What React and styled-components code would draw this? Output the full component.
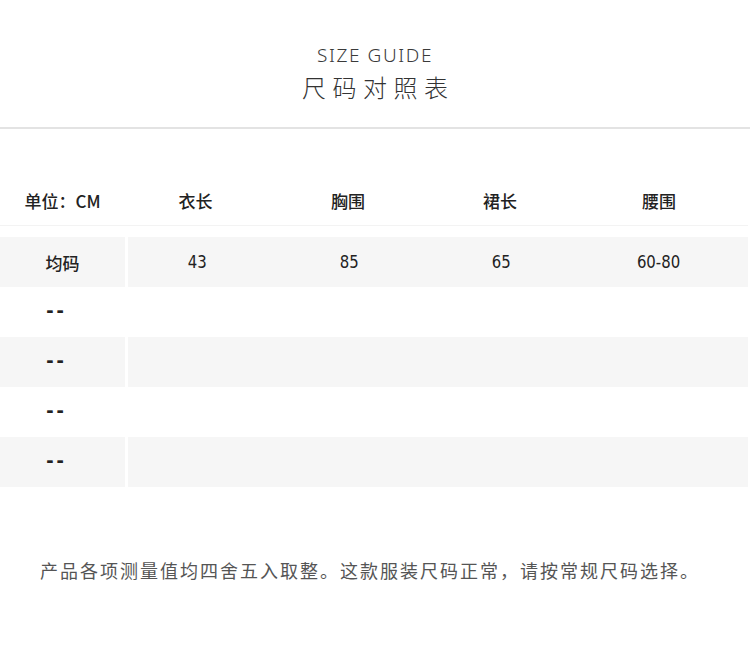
import React from 'react'
import styled, { createGlobalStyle } from 'styled-components'

const GlobalStyle = createGlobalStyle`
  html, body {
    margin: 0;
    padding: 0;
    background: #ffffff;
  }
  body {
    font-family: 'Noto Sans CJK SC', 'Noto Sans', sans-serif;
    color: #333333;
  }
`

const Page = styled.div`
  width: 750px;
  height: 646px;
  display: flex;
  flex-direction: column;
  background: #fff;
`

const TitleBlock = styled.header`
  height: 129px;
  box-sizing: border-box;
  padding-top: 42px;
  display: flex;
  flex-direction: column;
  align-items: center;
  border-bottom: 2px solid #e3e3e3; /* light gray rule */
`

const EnTitle = styled.div`
  font-family: 'Noto Sans', 'Open Sans', sans-serif;
  font-size: 19px;
  font-weight: 300;
  letter-spacing: 1.6px;
  line-height: 26px;
  color: #3a3a3a;
`

const CnTitle = styled.div`
  margin-top: 3px;
  font-size: 24px;
  font-weight: 300;
  letter-spacing: 6.5px;
  margin-right: -6.5px;
  line-height: 32px;
  color: #333;
`

const Table = styled.div`
  margin-top: 46px;
  display: flex;
  flex-direction: column;
`

const Row = styled.div`
  display: grid;
  grid-template-columns: 125px 141px 164px 140px 1fr;
  height: 50px;
  margin-right: 2px;
  border-bottom: ${p => (p.$head ? '1px solid #f3f3f3' : 'none')};
  margin-bottom: ${p => (p.$head ? '11px' : '0')};
`

const Cell = styled.div`
  display: flex;
  align-items: center;
  justify-content: center;
  background: ${p => (p.$shade ? '#f6f6f6' : 'transparent')};
  margin-left: ${p => (p.$split ? '3px' : '0')};
  font-size: 17px;
  font-weight: 500;
  color: #222;
`

const Sub = styled.div`
  width: 100%;
  height: 100%;
  margin-left: -3px;
  display: grid;
  grid-template-columns: 141px 164px 140px 1fr;
`

const Num = styled.span`
  font-family: 'DejaVu Sans Condensed', 'DejaVu Sans', sans-serif;
  font-stretch: condensed;
  font-size: 18px;
  font-weight: 400;
  transform: scaleX(0.92);
  margin-bottom: 2px;
  color: #222;
`

const Dash = styled.span`
  font-family: 'Liberation Sans', sans-serif;
  font-weight: 700;
  font-size: 22px;
  letter-spacing: 3px;
  margin: 0 0 5px -12px;
  color: #222;
`

const Note = styled.p`
  margin: 69px 0 0 40px;
  font-size: 18px;
  letter-spacing: 2px;
  color: #555;
  line-height: 28px;
`

const heads = ['单位：CM', '衣长', '胸围', '裙长', '腰围']
const rows = [
  ['均码', '43', '85', '65', '60-80'],
  ['--'],
  ['--'],
  ['--'],
  ['--'],
]

const App = () => (
  <Page>
    <GlobalStyle />
    <TitleBlock>
      <EnTitle>SIZE GUIDE</EnTitle>
      <CnTitle>尺码对照表</CnTitle>
    </TitleBlock>
    <Table>
      <Row $head>
        {heads.map(h => (
          <Cell key={h}>{h}</Cell>
        ))}
      </Row>
      {rows.map((r, idx) => {
        const shade = idx % 2 === 0
        return (
          <Row key={idx}>
            <Cell $shade={shade}>
              {r[0] === '--' ? <Dash>--</Dash> : r[0]}
            </Cell>
            <Cell $shade={shade} $split style={{ gridColumn: '2 / 6' }}>
              {r.length > 1 && (
                <Sub>
                  {r.slice(1).map(v => (
                    <Cell key={v}><Num>{v}</Num></Cell>
                  ))}
                </Sub>
              )}
            </Cell>
          </Row>
        )
      })}
    </Table>
    <Note>产品各项测量值均四舍五入取整。这款服装尺码正常，请按常规尺码选择。</Note>
  </Page>
)

export default App
